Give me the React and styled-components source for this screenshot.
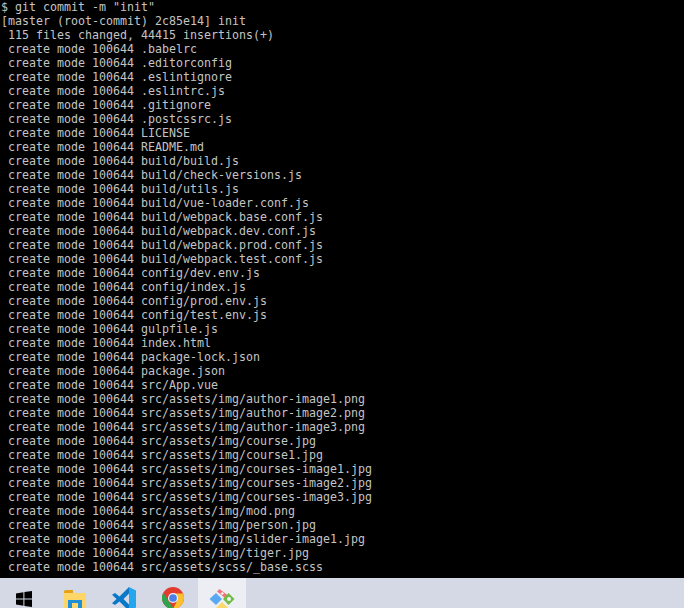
import React from 'react';
import styled, { createGlobalStyle } from 'styled-components';

const GlobalStyle = createGlobalStyle`
  html, body {
    margin: 0;
    padding: 0;
    background: #000;
  }
`;

const Page = styled.div`
  width: 684px;
  height: 608px;
  display: flex;
  flex-direction: column;
  overflow: hidden;
`;

const Terminal = styled.pre`
  flex: 1;
  margin: 0;
  padding: 0 0 0 1px;
  background: #000;
  color: #c4c4c4;
  font-family: "DejaVu Sans Mono", "Liberation Mono", monospace;
  font-size: 11.63px;
  line-height: 14px;
  overflow: hidden;
`;

const Taskbar = styled.div`
  height: 30px;
  flex: none;
  display: flex;
  background: #d5d9e6;
  overflow: hidden;
`;

const Tile = styled.div`
  width: ${(p) => p.$w}px;
  height: 30px;
  flex: none;
  padding: ${(p) => p.$top}px 0 0 ${(p) => p.$left}px;
  box-sizing: border-box;
  background: ${(p) => (p.$active ? '#eceef3' : 'transparent')};
`;

const Icon = styled.svg`
  display: block;
`;

const files = [
  '.babelrc', '.editorconfig', '.eslintignore', '.eslintrc.js', '.gitignore', '.postcssrc.js',
  'LICENSE', 'README.md', 'build/build.js', 'build/check-versions.js', 'build/utils.js',
  'build/vue-loader.conf.js', 'build/webpack.base.conf.js', 'build/webpack.dev.conf.js',
  'build/webpack.prod.conf.js', 'build/webpack.test.conf.js', 'config/dev.env.js',
  'config/index.js', 'config/prod.env.js', 'config/test.env.js', 'gulpfile.js', 'index.html',
  'package-lock.json', 'package.json', 'src/App.vue', 'src/assets/img/author-image1.png',
  'src/assets/img/author-image2.png', 'src/assets/img/author-image3.png',
  'src/assets/img/course.jpg', 'src/assets/img/course1.jpg', 'src/assets/img/courses-image1.jpg',
  'src/assets/img/courses-image2.jpg', 'src/assets/img/courses-image3.jpg',
  'src/assets/img/mod.png', 'src/assets/img/person.jpg', 'src/assets/img/slider-image1.jpg',
  'src/assets/img/tiger.jpg', 'src/assets/scss/_base.scss',
];

const output = [
  '$ git commit -m "init"',
  '[master (root-commit) 2c85e14] init',
  ' 115 files changed, 44415 insertions(+)',
  ...files.map((f) => ` create mode 100644 ${f}`),
].join('\n');

const WindowsIcon = () => (
  <Icon width="16" height="16" viewBox="0 0 16 16">
    <path fill="#000" d="M0 2.4 7.4 1.3V7.5H0ZM8.4 1.1 16 0V7.5H8.4ZM0 8.5H7.4V14.7L0 13.6ZM8.4 8.500H16V16L8.4 14.9Z" />
  </Icon>
);

const FolderIcon = () => (
  <Icon width="22" height="22" viewBox="0 0 22 22">
    <path fill="#e3a21a" d="M0 1.5A1.5 1.5 0 0 1 1.5 0H9V4H0Z" />
    <path fill="#fdd667" d="M0 3H21A1 1 0 0 1 22 4V22H0Z" />
    <path fill="#1f8fd8" d="M4 10H18V22H14V13H8V22H4Z" />
  </Icon>
);

const VsCodeIcon = () => (
  <Icon width="24" height="24" viewBox="0 0 24 24">
    <path fill="#23a6ee" d="M17 0 24 3.500V20.500L17 24Z" />
    <path fill="#0a78c8" d="M17 0V6.500L11.500 12 17 17.500V24L7.500 14.500 3 18 0 16.300 4.500 12 0 7.700 3 6 7.500 9.500Z" />
  </Icon>
);

const ChromeIcon = () => (
  <Icon width="22" height="22" viewBox="0 0 24 24">
    <circle cx="12" cy="12" r="12" fill="#e33b2e" />
    <path fill="#2fa44f" d="M12 24A12 12 0 0 1 1.600 6L7 15.300 13 24Z" />
    <path fill="#fbc02d" d="M12 7H22.900A12 12 0 0 1 12 24L16.500 15Z" />
    <circle cx="12" cy="12" r="5.500" fill="#f1f3f6" />
    <circle cx="12" cy="12" r="4.200" fill="#4b80e8" />
  </Icon>
);

const GitGuiIcon = () => (
  <Icon width="26" height="26" viewBox="0 0 26 26">
    <path fill="#f4737a" d="M8 4.500 10.500 2 19 8.500 16.500 11.500Z" />
    <path fill="#f6f7fa" d="M11.500 6.500 13.500 5 15 6.500 13 8Z" />
    <path fill="#5aa7f2" d="M0.500 12 7 6 13 12 7 18Z" />
    <path fill="#6fbc45" d="M14 12 19.500 6 25.500 12 19.500 18Z" />
    <circle cx="20" cy="12" r="2" fill="#f0f2f5" />
    <path fill="#fcd86a" d="M13 15 19 21 13 26 7 21Z" />
  </Icon>
);

const App = () => (
  <Page>
    <GlobalStyle />
    <Terminal>{output}</Terminal>
    <Taskbar>
      <Tile $w={48} $left={16} $top={13}><WindowsIcon /></Tile>
      <Tile $w={54} $left={16} $top={12}><FolderIcon /></Tile>
      <Tile $w={44} $left={10} $top={9}><VsCodeIcon /></Tile>
      <Tile $w={52} $left={16} $top={9}><ChromeIcon /></Tile>
      <Tile $w={48} $left={11} $top={9} $active><GitGuiIcon /></Tile>
    </Taskbar>
  </Page>
);

export default App;
